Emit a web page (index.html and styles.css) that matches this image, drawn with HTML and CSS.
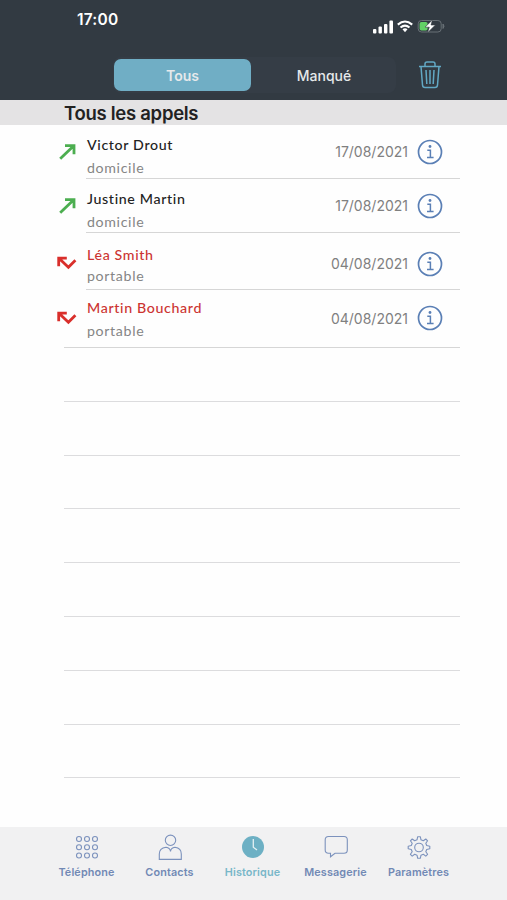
FILE: index.html
```
<!DOCTYPE html>
<html lang="fr">
<head>
	<meta charset="utf-8">
	<title>Historique</title>
	<link rel="stylesheet" href="styles.css">
</head>
<body>
	<svg width="0" height="0" class="defs">
		<symbol id="out" viewBox="0 0 20 20"><path d="M3.200 16.800L16 4.500M8 3.600H17V12.300" fill="none" stroke="#4cae50" stroke-width="2.800"/></symbol>
		<symbol id="missed" viewBox="0 0 20 20"><path d="M1.700 12.300V4.200H9.800M2.200 4.600L11.400 13.200L18.400 6.200" fill="none" stroke="#d92f2b" stroke-width="2.800"/></symbol>
		<symbol id="info" viewBox="0 0 26 26"><circle cx="13" cy="13" r="11.5" fill="none" stroke="#5a7fb5" stroke-width="1.7"/><circle cx="13" cy="7.5" r="1.4" fill="#5a7fb5"/><path d="M10.3 11.3H13.4V18.5M10 18.6H16.6" fill="none" stroke="#5a7fb5" stroke-width="1.5"/></symbol>
	</svg>

	<div id="phone">
		<header>
			<div class="status">
				<span class="time">17:00</span>
				<svg class="signals" width="74" height="16" viewBox="0 0 74 16">
					<g fill="#fff">
						<rect x="1" y="10" width="3.4" height="4.5" rx="1"/>
						<rect x="6.5" y="7.5" width="3.4" height="7" rx="1"/>
						<rect x="12" y="5" width="3.4" height="9.5" rx="1"/>
						<rect x="17.4" y="1.500" width="3.6" height="13" rx="1"/>
						<path d="M30.5 10.2Q33 8.3 35.500 10.200L33 13.200Z"/>
					</g>
					<path d="M25.800 5.600Q33 -0.600 40.200 5.600M28.500 8.500Q33 4.800 37.500 8.500" fill="none" stroke="#fff" stroke-width="2.1"/>
					<rect x="46.200" y="1.500" width="23" height="11.500" rx="3.300" fill="none" stroke="#687076"/>
					<path d="M71 5V9.500Q73 7.200 71 5Z" fill="#687076" stroke="#687076"/>
					<rect x="47.600" y="3" width="8" height="8.500" rx="1.800" fill="#62d166"/>
					<path d="M60.500 .8L53 8.200H57.300L55.500 13.800L63.400 6H59Z" fill="#fff" stroke="#323a42" stroke-width=".6"/>
				</svg>
			</div>
			<div class="toolbar">
				<div class="tabs">
					<span class="current">Tous</span>
					<span>Manqué</span>
				</div>
				<svg width="26" height="30" viewBox="0 0 26 30" fill="none" stroke="#62a8c4" stroke-width="1.500">
					<path d="M2 6.500H24M8 6.500V4Q8 2 10 2H16Q18 2 18 4V6.500M4 6.500L5.500 25Q5.700 27.500 8 27.500H18Q20.300 27.500 20.500 25L22 6.500M9 10L9.800 24M13 10V24M17 10L16.200 24"/>
				</svg>
			</div>
		</header>

		<h1>Tous les appels</h1>

		<ul id="calls">
			<li>
				<svg class="way"><use href="#out"/></svg>
				<div class="call">
					<div class="who"><b>Victor Drout</b><span>domicile</span></div>
					<time>17/08/2021</time>
					<svg class="info"><use href="#info"/></svg>
				</div>
			</li>
			<li>
				<svg class="way"><use href="#out"/></svg>
				<div class="call">
					<div class="who"><b>Justine Martin</b><span>domicile</span></div>
					<time>17/08/2021</time>
					<svg class="info"><use href="#info"/></svg>
				</div>
			</li>
			<li class="missed first">
				<svg class="way"><use href="#missed"/></svg>
				<div class="call">
					<div class="who"><b>Léa Smith</b><span>portable</span></div>
					<time>04/08/2021</time>
					<svg class="info"><use href="#info"/></svg>
				</div>
			</li>
			<li class="missed last">
				<svg class="way"><use href="#missed"/></svg>
				<div class="call">
					<div class="who"><b>Martin Bouchard</b><span>portable</span></div>
					<time>04/08/2021</time>
					<svg class="info"><use href="#info"/></svg>
				</div>
			</li>
		</ul>
		<ul id="lines">
			<li></li>
			<li></li>
			<li></li>
			<li></li>
			<li></li>
			<li></li>
			<li></li>
			<li></li>
			<li></li>
		</ul>

		<nav>
			<div>
				<svg width="26" height="26" viewBox="0 0 26 26">
					<circle cx="5" cy="5" r="2.500"/><circle cx="13" cy="5" r="2.500"/><circle cx="21" cy="5" r="2.500"/>
					<circle cx="5" cy="13.200" r="2.500"/><circle cx="13" cy="13.200" r="2.500"/><circle cx="21" cy="13.200" r="2.500"/>
					<circle cx="5" cy="21.500" r="2.500"/><circle cx="13" cy="21.500" r="2.500"/><circle cx="21" cy="21.500" r="2.500"/>
				</svg>
				<span>Téléphone</span>
			</div>
			<div>
				<svg width="26" height="26" viewBox="0 0 26 26">
					<circle cx="13.500" cy="6.300" r="5.200"/>
					<path d="M9 13.200Q13.200 13.800 13.500 17.500Q13.800 13.800 18 13.200Q24.300 14 24.300 20V25.400H2.300V20Q2.300 14 9 13.200Z"/>
				</svg>
				<span>Contacts</span>
			</div>
			<div class="current">
				<svg width="26" height="26" viewBox="0 0 26 26">
					<circle cx="13" cy="13" r="11" fill="#6db0c4"/>
					<path d="M13.300 5V13.200L17 16" stroke="#e4f0f3" stroke-width="1.300"/>
				</svg>
				<span>Historique</span>
			</div>
			<div>
				<svg width="26" height="26" viewBox="0 0 26 26">
					<path d="M5.500 2.500H21Q24.300 2.500 24.300 5.800V16Q24.300 19.300 21 19.300H12L7.500 22.800V19.300H5.500Q2.200 19.300 2.200 16V5.800Q2.200 2.500 5.500 2.500Z"/>
				</svg>
				<span>Messagerie</span>
			</div>
			<div>
				<svg width="26" height="26" viewBox="0 0 26 26">
					<circle cx="13" cy="13.500" r="4.300"/>
					<path d="M11.700 2.700H14.300L15 5.800L17.300 6.800L19.800 5L21.600 6.800L19.800 9.300L20.700 11.500L23.800 12.200V14.800L20.700 15.500L19.800 17.700L21.600 20.300L19.800 22.100L17.300 20.300L15 21.200L14.300 24.300H11.700L11 21.200L8.700 20.300L6.200 22.100L4.400 20.300L6.200 17.700L5.300 15.500L2.200 14.800V12.200L5.300 11.500L6.200 9.300L4.400 6.800L6.200 5L8.700 6.800L11 5.800Z" stroke-linejoin="round"/>
				</svg>
				<span>Paramètres</span>
			</div>
		</nav>
	</div>
</body>
</html>
```
FILE: styles.css
```
*{
	margin: 0;
	padding: 0;
	box-sizing: border-box;
}
li{
	list-style: none;
}
svg{
	display: block;
	flex: none;
}
.defs{
	display: none;
}
body{
	background: #fefefe;
	font-family: Inter, "Liberation Sans", sans-serif;
}
#phone{
	display: flex;
	flex-direction: column;
	height: 900px;
	overflow: hidden;
}
header{
	height: 100px;
	background: #323a42;
	color: #fff;
}
.status{
	display: flex;
	justify-content: space-between;
	height: 57px;
	padding: 10px 61px 0 77px;
}
.time{
	font-size: 15.5px;
	font-weight: 600;
	line-height: 20px;
	letter-spacing: .2px;
}
.signals{
	margin-top: 9px;
}
.toolbar{
	display: flex;
	align-items: center;
	gap: 21px;
	height: 36px;
	padding-left: 113px;
}
.tabs{
	display: flex;
	width: 283px;
	height: 36px;
	padding: 2px 1px;
	border-radius: 8px;
	background: #353d46;
}
.tabs span{
	flex: 1;
	padding-left: 2px;
	border-radius: 7px;
	font-size: 14px;
	font-weight: 500;
	line-height: 33px;
	text-align: center;
	color: #e6e9eb;
}
.tabs .current{
	flex: none;
	width: 137px;
	padding-left: 0;
	background: #70aec5;
	font-weight: 600;
}
h1{
	height: 25px;
	padding-left: 64px;
	background: #e4e3e4;
	font-size: 18.5px;
	font-weight: 600;
	line-height: 26px;
	letter-spacing: -.28px;
	color: #222;
}
#calls li{
	display: flex;
	align-items: center;
	height: 54px;
	padding: 0 47px 0 57px;
}
#calls .first{
	height: 57px;
}
#calls .last{
	height: 58px;
}
.way{
	width: 20px;
	height: 20px;
	margin-right: 9px;
}
.call{
	display: flex;
	flex: 1;
	align-items: center;
	height: 100%;
	border-bottom: 1px solid #d6d6d6;
}
.last .call{
	margin-left: -22px;
	padding-left: 22px;
}
.who{
	flex: 1;
	align-self: flex-start;
	padding: 10px 0 0 1px;
	font-family: Lato, "Liberation Sans", sans-serif;
	font-size: 14.2px;
	line-height: 20px;
	letter-spacing: .65px;
}
.who b{
	display: block;
	font-weight: 500;
	color: #222;
}
.who span{
	display: block;
	padding-top: 3px;
	color: #858585;
}
.missed b{
	color: #cc3431;
}
.first .who{
	padding-top: 12px;
}
.first .who span{
	padding-top: 1px;
}
.last .who{
	padding-top: 8px;
}
time{
	margin-right: 9px;
	font-size: 14px;
	color: #808080;
}
.info{
	width: 26px;
	height: 26px;
	margin-right: 17px;
}
.first .way, .first time, .first .info{
	margin-top: 5px;
}
.last time, .last .info{
	margin-top: -1px;
}
#lines{
	flex: 1;
	padding: 0 47px 0 64px;
}
#lines li{
	height: 53.8px;
	border-bottom: 1px solid #dcdcde;
}
#lines li:last-child{
	border: 0;
	height: 48px;
}
nav{
	display: flex;
	height: 73px;
	padding: 7px 47px 0 45px;
	background: #f1f1f2;
}
nav div{
	display: flex;
	flex: 1;
	flex-direction: column;
	align-items: center;
	gap: 5px;
	font-size: 10.8px;
	font-weight: 600;
	line-height: 16px;
	letter-spacing: .15px;
	color: #7189b5;
}
nav svg{
	fill: none;
	stroke: #7c92bd;
	stroke-width: 1.1;
}
nav .current{
	color: #78b7c9;
}
nav .current svg{
	stroke: none;
}
```
